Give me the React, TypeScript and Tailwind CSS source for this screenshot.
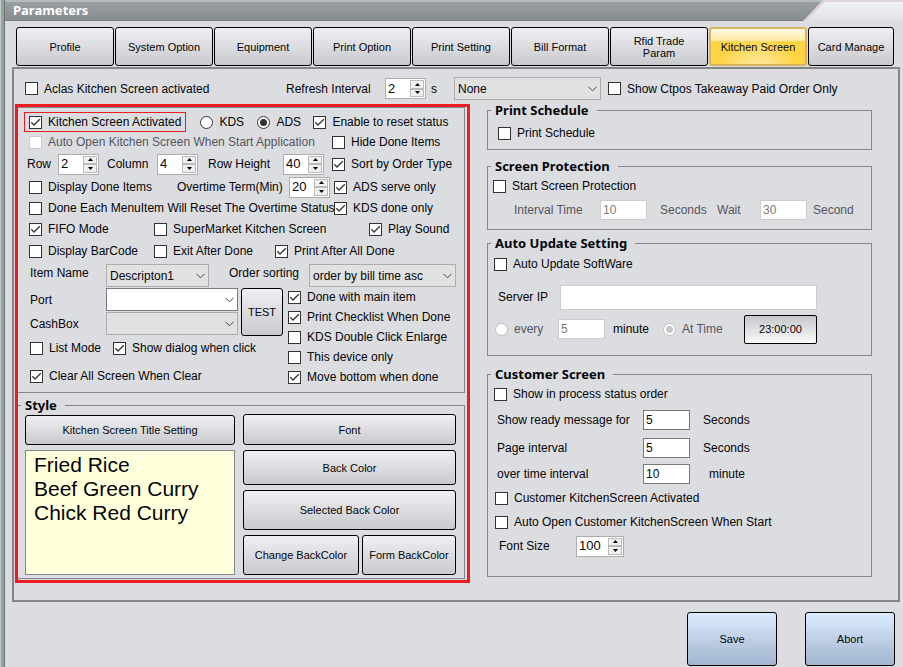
// App.tsx
import type { ReactNode } from "react";
import { useState } from "react";

const tabs = [
  "Profile",
  "System Option",
  "Equipment",
  "Print Option",
  "Print Setting",
  "Bill Format",
  "Rfid Trade Param",
  "Kitchen Screen",
];

const dishes = ["Fried Rice", "Beef Green Curry", "Chick Red Curry"];

const Check = ({
  label,
  checked = false,
  disabled = false,
  className = "",
}: {
  label: string;
  checked?: boolean;
  disabled?: boolean;
  className?: string;
}) => (
  <label
    className={`flex items-center gap-1.5 whitespace-nowrap ${disabled ? "text-[#55555f]" : ""} ${className}`}
  >
    <span className="relative block size-[13px] shrink-0">
      <input
        type="checkbox"
        defaultChecked={checked}
        disabled={disabled}
        className="peer block size-[13px] appearance-none border border-[#333] bg-white disabled:border-[#ccc]"
      />
      <svg
        viewBox="0 0 13 13"
        className="pointer-events-none absolute inset-0 hidden size-[13px] peer-checked:block"
      >
        <path
          d="M2.3 6.3 5 9 10.8 3.2"
          fill="none"
          stroke="#333"
          strokeWidth="1.3"
        />
      </svg>
    </span>
    {label}
  </label>
);

const Radio = ({
  name,
  label,
  checked = false,
  disabled = false,
  className = "",
}: {
  name: string;
  label: string;
  checked?: boolean;
  disabled?: boolean;
  className?: string;
}) => (
  <label
    className={`flex items-center gap-1.5 whitespace-nowrap ${disabled ? "text-[#55555f]" : ""} ${className}`}
  >
    <span className="relative block size-[13px] shrink-0">
      <input
        type="radio"
        name={name}
        defaultChecked={checked}
        disabled={disabled}
        className="peer block size-[13px] appearance-none rounded-full border border-[#333] bg-white disabled:border-[#bcbcbc]"
      />
      <span className="pointer-events-none absolute inset-[3px] hidden rounded-full bg-[#333] peer-checked:block peer-disabled:bg-[#c8c8c8]" />
    </span>
    {label}
  </label>
);

const Spinner = ({
  id,
  value,
  className = "w-[41px]",
}: {
  id: string;
  value: number;
  className?: string;
}) => {
  const [count, setCount] = useState(value);

  return (
    <div
      className={`flex h-[21px] shrink-0 border border-[#adadad] bg-white p-px ${className}`}
    >
      <input
        id={id}
        value={count}
        onChange={(e) => setCount(Number(e.target.value) || 0)}
        className="w-full min-w-0 flex-1 px-px text-[13px] outline-none"
      />
      <div className="flex w-3.5 shrink-0 flex-col">
        <button
          aria-label="Increase"
          onClick={() => setCount(count + 1)}
          className="flex flex-1 items-center justify-center border border-[#bbb] bg-[#f0f0f0]"
        >
          <svg viewBox="0 0 5 3" className="h-[3px] w-[5px]">
            <path d="M0 3 2.5 0 5 3z" />
          </svg>
        </button>
        <button
          aria-label="Decrease"
          onClick={() => setCount(count - 1)}
          className="flex flex-1 items-center justify-center border border-[#bbb] bg-[#f0f0f0]"
        >
          <svg viewBox="0 0 5 3" className="h-[3px] w-[5px]">
            <path d="M0 0 2.5 3 5 0z" />
          </svg>
        </button>
      </div>
    </div>
  );
};

const Select = ({
  id,
  label,
  options,
  editable = false,
  className,
}: {
  id: string;
  label?: string;
  options: string[];
  editable?: boolean;
  className: string;
}) => (
  <div className={`relative shrink-0 ${className}`}>
    <select
      id={id}
      aria-label={label}
      className={`block h-[23px] w-full appearance-none border pr-5 pl-[3px] outline-none ${
        editable ? "border-[#7a7a7a] bg-white" : "border-[#adadad] bg-[#e1e1e1]"
      }`}
    >
      {options.map((option) => (
        <option key={option}>{option}</option>
      ))}
    </select>
    <svg
      viewBox="0 0 9 6"
      className="pointer-events-none absolute top-[9px] right-1 h-1.5 w-[9px]"
    >
      <path d="M.5.8 4.5 4.8 8.5.8" fill="none" stroke="#444" />
    </svg>
  </div>
);

const TextBox = ({
  id,
  value = "",
  disabled = false,
  className = "h-5 w-[47px]",
}: {
  id: string;
  value?: string;
  disabled?: boolean;
  className?: string;
}) => (
  <input
    id={id}
    type="text"
    defaultValue={value}
    disabled={disabled}
    className={`shrink-0 border border-[#7a7a7a] bg-white px-0.5 outline-none disabled:border-[#ccc] disabled:text-[#7a7a7a] ${className}`}
  />
);

const Button = ({
  children,
  className = "",
}: {
  children: ReactNode;
  className?: string;
}) => (
  <button
    className={`rounded-[3px] border border-black bg-linear-to-b from-[#f0f0f4] to-[#c9cacd] text-[11px] leading-3 ${className}`}
  >
    {children}
  </button>
);

const Group = ({
  title,
  children,
  className = "",
}: {
  title: string;
  children: ReactNode;
  className?: string;
}) => (
  <fieldset className={`border border-[#868686] pl-[3px] ${className}`}>
    <legend className="pr-2 pl-1 font-['Noto_Sans',sans-serif] text-[13px] leading-4 font-bold">
      {title}
    </legend>
    {children}
  </fieldset>
);

const KitchenSettings = () => (
  <div className="border-t border-r border-b border-[#868686] pt-1 pb-1">
    <div className="flex h-5 items-center">
      <div className="ml-1.5 border border-[#ed1c24] py-0.5 pr-1 pl-1">
        <Check label="Kitchen Screen Activated" checked className="leading-3.5" />
      </div>
      <Radio name="mode" label="KDS" className="ml-3.5 w-[57px]" />
      <Radio name="mode" label="ADS" checked className="w-14" />
      <Check label="Enable to reset status" checked />
    </div>
    <div className="flex h-5 items-center pl-[11px]">
      <Check
        label="Auto Open Kitchen Screen When Start Application"
        disabled
        className="w-[303px]"
      />
      <Check label="Hide Done Items" />
    </div>
    <div className="flex h-6 items-center pl-[9px]">
      <label htmlFor="row" className="w-[31px]">
        Row
      </label>
      <Spinner id="row" value={2} />
      <label htmlFor="column" className="w-[58px] pl-2">
        Column
      </label>
      <Spinner id="column" value={4} />
      <label htmlFor="row-height" className="w-[85px] pl-2.5">
        Row Height
      </label>
      <Spinner id="row-height" value={40} />
      <Check label="Sort by Order Type" checked className="ml-2" />
    </div>
    <div className="flex h-[22px] items-center pl-[11px]">
      <Check label="Display Done Items" className="w-[148px]" />
      <label htmlFor="overtime" className="w-28">
        Overtime Term(Min)
      </label>
      <Spinner id="overtime" value={20} />
      <Check label="ADS serve only" checked className="ml-1" />
    </div>
    <div className="flex h-5 items-center pl-[11px]">
      <Check
        label="Done Each MenuItem Will Reset The Overtime Status"
        className="w-[305px]"
      />
      <Check label="KDS done only" checked />
    </div>
    <div className="flex h-[22px] items-center pl-[11px]">
      <Check label="FIFO Mode" checked className="w-[125px]" />
      <Check label="SuperMarket Kitchen Screen" className="w-[215px]" />
      <Check label="Play Sound" checked />
    </div>
    <div className="flex h-[22px] items-center pl-[11px]">
      <Check label="Display BarCode" className="w-[125px]" />
      <Check label="Exit After Done" className="w-[121px]" />
      <Check label="Print After All Done" checked />
    </div>
    <div className="mt-0.5 flex h-6 pl-3">
      <label htmlFor="item-name" className="w-[76px] pt-px">
        Item Name
      </label>
      <Select
        id="item-name"
        options={["Descripton1", "Descripton2"]}
        className="w-[103px]"
      />
      <label htmlFor="sorting" className="w-[100px] pt-px pl-5">
        Order sorting
      </label>
      <Select
        id="sorting"
        options={["order by bill time asc", "order by bill time desc"]}
        className="w-[147px]"
      />
    </div>
    <div className="flex pl-3">
      <div className="w-[258px]">
        <div className="flex gap-[3px]">
          <div className="space-y-px">
            <div className="flex items-center">
              <label htmlFor="port" className="w-[76px]">
                Port
              </label>
              <Select
                id="port"
                options={["", "COM1", "COM2"]}
                editable
                className="w-[132px]"
              />
            </div>
            <div className="flex items-center">
              <label htmlFor="cashbox" className="w-[76px]">
                CashBox
              </label>
              <Select
                id="cashbox"
                options={["", "COM1", "COM2"]}
                className="w-[132px]"
              />
            </div>
          </div>
          <Button className="h-12 w-[42px]">TEST</Button>
        </div>
        <div className="mt-0.5 flex h-5 items-center">
          <Check label="List Mode" className="w-[83px]" />
          <Check label="Show dialog when click" checked />
        </div>
        <Check
          label="Clear All Screen When Clear"
          checked
          className="mt-2 h-5"
        />
      </div>
      <div className="-mt-px pb-px">
        <Check label="Done with main item" checked className="h-5" />
        <Check label="Print Checklist When Done" checked className="h-5" />
        <Check label="KDS Double Click Enlarge" className="h-5" />
        <Check label="This device only" className="h-5" />
        <Check label="Move bottom when done" checked className="h-5" />
      </div>
    </div>
  </div>
);

const StyleSettings = () => (
  <fieldset className="mt-1 border-t border-r border-b border-[#868686] pr-2 pb-[3px] pl-[3px]">
    <legend className="pr-2 pl-1 font-['Noto_Sans',sans-serif] text-[13px] leading-4 font-bold">
      Style
    </legend>
    <div className="flex gap-2 pt-px pl-1">
      <div className="flex w-[210px] flex-col gap-[5px] pt-px">
        <Button className="h-[30px]">Kitchen Screen Title Setting</Button>
        <ul className="flex-1 border border-[#828790] bg-[#ffffdc] px-2 py-0.5 text-[21px] leading-6">
          {dishes.map((dish) => (
            <li key={dish}>{dish}</li>
          ))}
        </ul>
      </div>
      <div className="flex flex-1 flex-col gap-[5px]">
        <Button className="h-[31px]">Font</Button>
        <Button className="h-[35px]">Back Color</Button>
        <Button className="h-10">Selected Back Color</Button>
        <div className="flex gap-[3px]">
          <Button className="h-10 flex-[116]">Change BackColor</Button>
          <Button className="h-10 flex-[94]">Form BackColor</Button>
        </div>
      </div>
    </div>
  </fieldset>
);

const RightColumn = () => (
  <div className="-mt-0.5">
    <Group title="Print Schedule" className="min-h-12">
      <Check label="Print Schedule" className="h-[30px] pl-[7px]" />
    </Group>
    <Group title="Screen Protection" className="mt-2 min-h-[72px]">
      <Check label="Start Screen Protection" className="h-6 pl-0.5" />
      <div className="flex h-6 items-center pl-[23px] text-[#55555f]">
        <label htmlFor="interval" className="w-[86px]">
          Interval Time
        </label>
        <TextBox id="interval" value="10" disabled />
        <span className="w-[70px] pl-[13px]">Seconds</span>
        <label htmlFor="wait" className="w-[43px]">
          Wait
        </label>
        <TextBox id="wait" value="30" disabled />
        <span className="pl-1.5">Second</span>
      </div>
    </Group>
    <Group title="Auto Update Setting" className="mt-[5px] min-h-[121px]">
      <Check label="Auto Update SoftWare" className="h-[26px] pl-[3px]" />
      <div className="mt-2 flex h-6 items-center pl-[7px]">
        <label htmlFor="server-ip" className="w-[62px]">
          Server IP
        </label>
        <TextBox id="server-ip" disabled className="h-[25px] w-[257px]" />
      </div>
      <div className="mt-1 flex h-8 items-center pl-1">
        <Radio name="update" label="every" disabled className="w-[63px]" />
        <TextBox id="every-value" value="5" disabled />
        <label htmlFor="every-value" className="w-[58px] pl-2">
          minute
        </label>
        <Radio
          name="update"
          label="At Time"
          checked
          disabled
          className="w-[81px]"
        />
        <button className="h-[29px] w-[73px] rounded-[2px] border border-black bg-linear-to-b from-[#c6c7ca] to-[#fafafa] text-[11px]">
          23:00:00
        </button>
      </div>
    </Group>
    <Group title="Customer Screen" className="mt-2.5 min-h-[211px]">
      <Check label="Show in process status order" className="h-6 pl-[3px]" />
      <div className="grid grid-cols-[146px_60px_1fr] items-center pl-1.5">
        <label htmlFor="ready">Show ready message for</label>
        <TextBox id="ready" value="5" />
        <span className="leading-7">Seconds</span>
        <label htmlFor="page">Page interval</label>
        <TextBox id="page" value="5" />
        <span className="leading-7">Seconds</span>
        <label htmlFor="over">over time interval</label>
        <TextBox id="over" value="10" />
        <span className="pl-1.5 leading-6">minute</span>
      </div>
      <Check label="Customer KitchenScreen Activated" className="h-6 pl-1" />
      <Check
        label="Auto Open Customer KitchenScreen When Start"
        className="h-6 pl-1"
      />
      <div className="flex h-6 items-center pl-2">
        <label htmlFor="font-size" className="w-[77px]">
          Font Size
        </label>
        <Spinner id="font-size" value={100} className="w-12" />
      </div>
    </Group>
  </div>
);

export default function App() {
  return (
    <div className="flex min-h-screen bg-[#dcdde1] font-['Liberation_Sans',Arial,sans-serif] text-xs leading-4 text-[#050508]">
      <div className="w-[5px] shrink-0 border-r border-l border-r-[#6b7472] border-l-[#c3cbc8] bg-[#95a29e]" />
      <div className="flex min-w-0 flex-1 flex-col">
        <header className="border-b-2 border-[#e0dae4] bg-linear-to-b from-[#f3f4f6] to-[#dfe0e4]">
          {/* light edge that follows the slanted end of the title bar */}
          <div className="bg-[#ddd3df] pr-[3px] [clip-path:polygon(0_0,100%_0,100%_2px,calc(100%-78px)_2px,calc(100%-97px)_100%,0_100%)]">
            <h1 className="mr-[77px] h-[21px] border-t-2 border-b border-t-[#b3bcba] border-b-[#6f7f7a] bg-linear-to-b from-[#9a9fa2] to-[#868d90] pl-2 font-['Noto_Sans',sans-serif] text-[13px] leading-4 font-bold text-white [clip-path:polygon(0_0,100%_0,calc(100%-20px)_100%,0_100%)]">
              Parameters
            </h1>
          </div>
        </header>

        <main className="flex-1 border-l-2 border-[#e0dae4] pr-[3px] pl-[5px]">
          <nav className="mt-1 grid grid-cols-[repeat(8,98fr)_86fr] gap-px pr-1.5 pl-1">
            {tabs.map((tab) =>
              tab === "Kitchen Screen" ? (
                <button
                  key={tab}
                  className="h-[39px] rounded-[3px] border-2 border-[#d9b45c] bg-[radial-gradient(ellipse_at_50%_120%,#ffeaa8_0%,#ffdc6a00_60%),linear-gradient(to_bottom,#fffaea_0%,#ffe9a0_34%,#ffd443_36%,#ffd443_100%)] text-[11px] leading-3"
                >
                  {tab}
                </button>
              ) : (
                <Button key={tab} className="h-[39px] px-2">
                  {tab}
                </Button>
              ),
            )}
            <Button className="h-[39px] px-1">Card Manage</Button>
          </nav>

          <section className="mt-px border-2 border-[#868686] pb-[17px]">
            <div className="flex h-[35px] items-center pt-1 pl-[11px]">
              <Check
                label="Aclas Kitchen Screen activated"
                className="w-[261px]"
              />
              <label htmlFor="refresh" className="w-[99px]">
                Refresh Interval
              </label>
              <Spinner id="refresh" value={2} />
              <span className="w-7 pl-[5px]">s</span>
              <Select
                id="screen"
                label="Screen"
                options={["None"]}
                className="mr-[7px] w-[147px]"
              />
              <Check label="Show Ctpos Takeaway Paid Order Only" />
            </div>
            <div className="grid grid-cols-[455fr_385fr] gap-[17px] pr-[26px] pl-px">
              <div className="border-[3px] border-[#ed1c24] pr-0.5 pb-px">
                <KitchenSettings />
                <StyleSettings />
              </div>
              <RightColumn />
            </div>
          </section>

          <footer className="flex justify-end gap-7 pt-2.5 pr-[5px] pb-0.5">
            <button className="h-[54px] w-[90px] rounded-[3px] border border-black bg-linear-to-b from-[#dcecff] to-[#a3b5cf] text-[11px]">
              Save
            </button>
            <button className="h-[54px] w-[90px] rounded-[3px] border border-black bg-linear-to-b from-[#dcecff] to-[#a3b5cf] text-[11px]">
              Abort
            </button>
          </footer>
        </main>
      </div>
    </div>
  );
}
